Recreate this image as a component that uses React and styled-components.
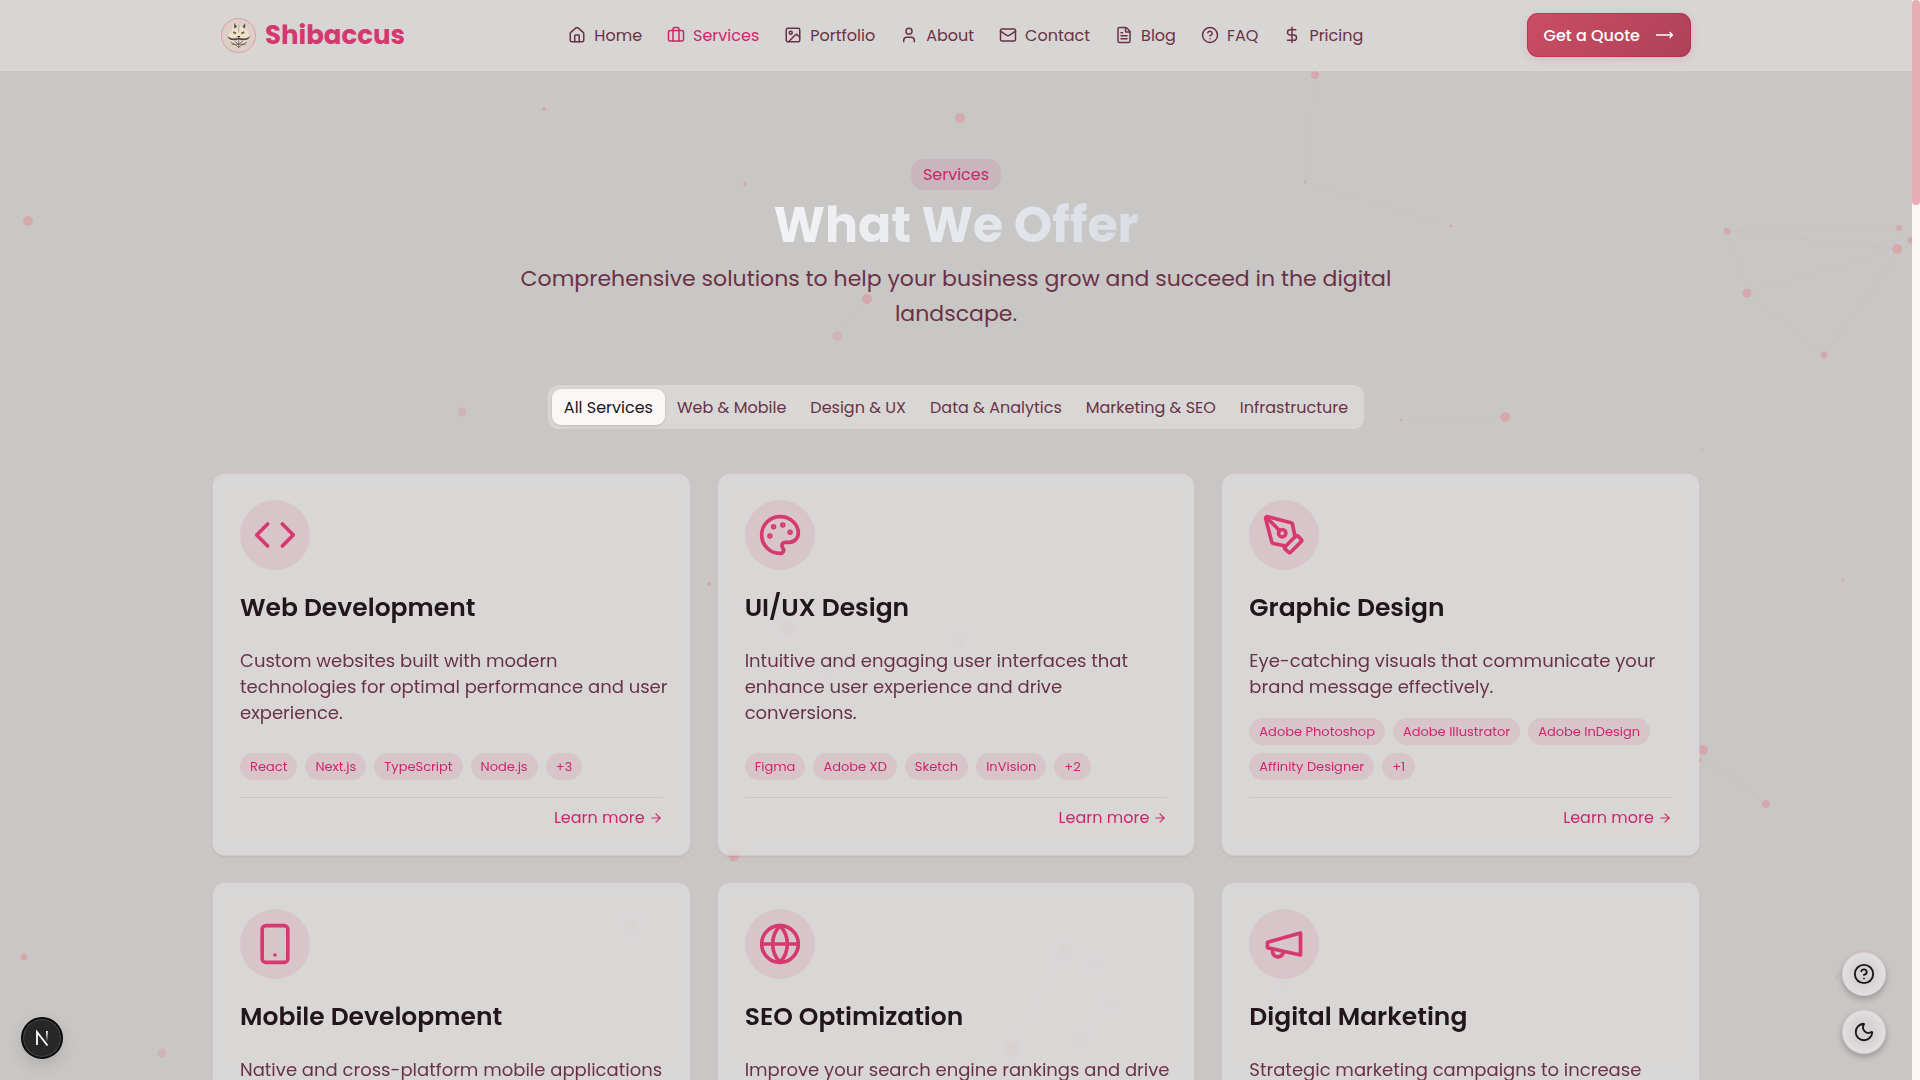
import React from "react";
import styled, { createGlobalStyle } from "styled-components";
import {
  House, Briefcase, Image, User, Mail, FileText, CircleQuestionMark, DollarSign,
  Code, Palette, PenTool, Smartphone, Globe, ArrowRight, Moon,
} from "lucide-react";

const color = {
  page: "#c9c7c6",
  panel: "rgba(233, 232, 233, 0.48)",
  pink: "#d0246b",
  wine: "#6b3145",
  ink: "#22161a",
  tint: "rgba(214, 51, 108, 0.11)",
};

const GlobalStyle = createGlobalStyle`
  *, *::before, *::after { box-sizing: border-box; }
  body {
    margin: 0;
    background: ${color.page};
    color: ${color.wine};
    font-family: Poppins, Inter, "Open Sans", sans-serif;
    font-size: 18px;
  }
  h1, h2, p, ul { margin: 0; padding: 0; }
  ul { list-style: none; }
  a { color: inherit; text-decoration: none; }
  button { font: inherit; border: 0; cursor: pointer; }
`;

const Window = styled.div`
  display: grid;
  grid-template-columns: minmax(0, 1fr) 8px;
  height: 100vh;
  overflow: hidden;
`;

const Page = styled.div`
  position: relative;
  overflow: hidden;
`;

const ScrollTrack = styled.div`
  background: #f9f8f7;
`;

const ScrollThumb = styled.div`
  height: 19%;
  border-radius: 4px;
  background: #e8acb5;
`;

const Backdrop = styled.svg`
  position: absolute;
  inset: 0;
  width: 100%;
  height: 100%;
  pointer-events: none;
`;

const Header = styled.header`
  position: relative;
  background: #d8d6d5;
  border-bottom: 1px solid #dcd9d3;
`;

const HeaderInner = styled.div`
  display: flex;
  justify-content: space-between;
  align-items: center;
  max-width: 1488px;
  height: 70px;
  margin: 0 auto;
  padding: 0 9px;
`;

const Brand = styled.a`
  display: flex;
  align-items: center;
  gap: 9px;
  color: #d5386f;
  font-size: 26px;
  font-weight: 700;
`;

const NavList = styled.nav`
  display: flex;
  gap: 25px;
`;

const NavLink = styled.a`
  display: flex;
  align-items: center;
  gap: 8px;
  color: ${(p) => (p.$active ? color.pink : color.wine)};
  font-size: 16px;
`;

const QuoteButton = styled.button`
  display: flex;
  align-items: center;
  gap: 16px;
  height: 44px;
  padding: 0 17px;
  border-radius: 11px;
  background: linear-gradient(135deg, #cb4d63, #ae4158);
  box-shadow: inset 0 0 0 1px rgba(190, 30, 70, 0.5), 0 2px 10px rgba(214, 60, 110, 0.2);
  color: #fff;
  font-size: 16px;
  font-weight: 500;
`;

const Main = styled.main`
  position: relative;
  max-width: 1488px;
  margin: 0 auto;
  padding-top: 88px;
`;

const Hero = styled.section`
  display: flex;
  flex-direction: column;
  align-items: center;
  text-align: center;
`;

const Badge = styled.span`
  padding: 0 12px;
  border-radius: 13px;
  background: rgba(208, 36, 107, 0.1);
  color: ${color.pink};
  font-size: 16px;
  line-height: 31px;
`;

const HeroTitle = styled.h1`
  background: linear-gradient(90deg, #f2f3f5, #d9dee5);
  background-clip: text;
  -webkit-background-clip: text;
  color: transparent;
  font-size: 49px;
  font-weight: 700;
  line-height: 71px;
`;

const HeroText = styled.p`
  max-width: 900px;
  color: ${color.wine};
  font-size: 22px;
  line-height: 35px;
`;

const TabBar = styled.div`
  display: flex;
  width: fit-content;
  margin: 54px auto 44px;
  padding: 4px;
  border-radius: 11px;
  background: ${color.panel};
`;

const Tab = styled.button`
  height: 36px;
  padding: 0 12px;
  border-radius: 9px;
  background: ${(p) => (p.$active ? "#f9f8f7" : "transparent")};
  box-shadow: ${(p) => (p.$active ? "0 1px 3px rgba(0, 0, 0, 0.12)" : "none")};
  color: ${(p) => (p.$active ? color.ink : color.wine)};
  font-size: 16px;
  white-space: nowrap;
`;

const CardGrid = styled.div`
  display: grid;
  grid-template-columns: repeat(3, minmax(0, 1fr));
  gap: 26px;
`;

const Card = styled.article`
  display: flex;
  flex-direction: column;
  align-items: flex-start;
  padding: 26px 27px;
  border: 1px solid rgba(222, 120, 150, 0.2);
  border-radius: 13px;
  background: ${color.panel};
  backdrop-filter: blur(5px);
  box-shadow: 0 1px 2px rgba(0, 0, 0, 0.08);
`;

const IconDisc = styled.div`
  padding: 13px;
  border-radius: 50%;
  background: ${color.tint};
  color: #d6396f;
  svg { display: block; width: 44px; height: 44px; }
`;

const CardTitle = styled.h2`
  margin-top: 20px;
  color: ${color.ink};
  font-size: 25px;
  font-weight: 600;
  line-height: 36px;
`;

const CardText = styled.p`
  margin: 22px -8px 18px 0;
  color: ${color.wine};
  font-size: 18px;
  line-height: 26px;
`;

const TagList = styled.ul`
  display: flex;
  flex-wrap: wrap;
  gap: 8px;
  margin-top: auto;
`;

const Tag = styled.li`
  padding: 0 10px;
  border-radius: 14px;
  background: ${color.tint};
  color: ${color.pink};
  font-size: 13px;
  line-height: 27px;
`;

const CardFooter = styled.footer`
  display: flex;
  justify-content: flex-end;
  align-self: stretch;
  margin-top: 17px;
  padding-top: 9px;
  border-top: 1px solid rgba(200, 130, 145, 0.28);
`;

const MoreLink = styled.a`
  display: flex;
  align-items: center;
  gap: 4px;
  color: ${color.pink};
  font-size: 16px;
  line-height: 22px;
`;

const FloatStack = styled.div`
  position: absolute;
  right: 26px;
  bottom: 26px;
  display: flex;
  flex-direction: column;
  gap: 14px;
`;

const FloatButton = styled.button`
  display: grid;
  place-items: center;
  width: 44px;
  height: 44px;
  padding: 0;
  border: 1px solid #e3c9d0;
  border-radius: 50%;
  background: radial-gradient(circle, #d3d1d1 30%, #e4e1e2 75%);
  box-shadow: 0 3px 6px rgba(0, 0, 0, 0.25);
  color: #1c1416;
`;

const DevButton = styled.button`
  position: absolute;
  left: 21px;
  bottom: 21px;
  display: grid;
  place-items: center;
  width: 42px;
  height: 42px;
  padding: 0;
  border: 2px solid #0b0b0b;
  border-radius: 50%;
  background: #272727;
  box-shadow: inset 0 0 0 1px #4a4a4a, 0 6px 16px rgba(0, 0, 0, 0.12);
`;

const particles = [
  [1315, 75, 4], [544, 109, 2], [960, 118, 5], [745, 184, 2], [28, 221, 5], [1305, 182, 1.5],
  [1451, 226, 1.5], [1727, 231, 3.5], [1899, 228, 3], [1897, 249, 5], [1911, 240, 3.5],
  [1747, 293, 4.5], [1824, 355, 3.5], [867, 299, 5], [837, 336, 5, 0.6], [462, 412, 4.5, 0.6],
  [1505, 417, 5], [1401, 420, 1.5], [1702, 450, 1.5, 0.6], [709, 584, 2], [1843, 580, 2, 0.6],
  [1703, 750, 5], [1700, 760, 2], [1766, 804, 4], [734, 856, 5.5], [24, 957, 3.5],
  [162, 1053, 4.5, 0.6], [1837, 977, 1.5, 0.6], [787, 627, 5], [958, 640, 5, 0.6],
  [829, 672, 4, 0.5], [631, 926, 6, 0.5], [1065, 949, 5, 0.6], [1095, 962, 4, 0.4],
  [1111, 1003, 4, 0.4], [1082, 1040, 5, 0.5], [1011, 1049, 6, 0.8], [1284, 984, 5, 0.5],
];

const threads = [
  [1727, 231, 1899, 228], [1727, 231, 1897, 249], [1727, 231, 1747, 293], [1899, 228, 1897, 249],
  [1897, 249, 1747, 293], [1897, 249, 1824, 355], [1911, 240, 1824, 355], [1305, 182, 1451, 226],
  [1305, 182, 1315, 75], [867, 299, 837, 336], [544, 109, 544, 71], [1747, 293, 1824, 355],
  [1505, 417, 1401, 420], [1703, 750, 1766, 804], [1700, 760, 1766, 804], [709, 584, 787, 627],
  [1065, 949, 1011, 1049], [1065, 949, 1111, 1003], [1111, 1003, 1082, 1040],
];

const navItems = [
  ["Home", House], ["Services", Briefcase], ["Portfolio", Image], ["About", User],
  ["Contact", Mail], ["Blog", FileText], ["FAQ", CircleQuestionMark], ["Pricing", DollarSign],
];

const tabs = [
  "All Services", "Web & Mobile", "Design & UX", "Data & Analytics", "Marketing & SEO", "Infrastructure",
];

function MegaphoneIcon() {
  return (
    <svg viewBox="0 0 24 24" fill="none" stroke="currentColor" strokeWidth="2" strokeLinecap="round" strokeLinejoin="round">
      <path d="m3 11 18-5v12L3 14v-3z" />
      <path d="M11.6 16.8a3 3 0 1 1-5.8-1.6" />
    </svg>
  );
}

const services = [
  {
    icon: Code,
    title: "Web Development",
    text: "Custom websites built with modern technologies for optimal performance and user experience.",
    tags: ["React", "Next.js", "TypeScript", "Node.js", "+3"],
  },
  {
    icon: Palette,
    title: "UI/UX Design",
    text: "Intuitive and engaging user interfaces that enhance user experience and drive conversions.",
    tags: ["Figma", "Adobe XD", "Sketch", "InVision", "+2"],
  },
  {
    icon: PenTool,
    title: "Graphic Design",
    text: "Eye-catching visuals that communicate your brand message effectively.",
    tags: ["Adobe Photoshop", "Adobe Illustrator", "Adobe InDesign", "Affinity Designer", "+1"],
  },
  { icon: Smartphone, title: "Mobile Development", text: "Native and cross-platform mobile applications", tags: [] },
  { icon: Globe, title: "SEO Optimization", text: "Improve your search engine rankings and drive", tags: [] },
  { icon: MegaphoneIcon, title: "Digital Marketing", text: "Strategic marketing campaigns to increase", tags: [] },
];

function BrandMark() {
  return (
    <svg width="35" height="35" viewBox="0 0 36 36" aria-hidden="true">
      <circle cx="18" cy="18" r="17.5" fill="#ddcfc6" stroke="#e48aa2" strokeWidth="0.8" />
      <path d="M13 4l4 5h3l5-5 2 9 3 6-4 6-8 6-8-6-4-6 5-6z" fill="#ebe2d2" />
      <path d="M13.500 5v6l3-2zM25 5v6l-3-2z" fill="#5f5145" />
      <path d="M12.500 14.500l3 1.300M24 14.500l-3 1.300" stroke="#76652c" strokeWidth="1.8" />
      <path d="M16.500 18.500h3.500l-1.700 2z" fill="#2b231e" />
      <path d="M6.500 18c3 4 7 3 11.700 2.500 4.800.5 8.800 1.500 11.800-2.500-1 5-6 6-11.800 4-5.700 2-10.700 1-11.700-4z" fill="#57493f" />
      <path d="M10 24.500l8.200 5.500 8.300-5.500M11 27h14.500M18.200 22v9M14 24l4.200 3 4.300-3" stroke="#6b5d51" strokeWidth="0.9" fill="none" />
      <path d="M18.300 7v8" stroke="#a99a86" strokeWidth="0.8" />
    </svg>
  );
}

function LongArrow() {
  return (
    <svg width="18" height="8" viewBox="0 0 18 8" fill="none" stroke="currentColor" strokeWidth="1.3" aria-hidden="true">
      <path d="M0 4h16.500M13.500 1l3 3-3 3" />
    </svg>
  );
}

function NextMark() {
  return (
    <svg width="15" height="16" viewBox="0 0 15 16" fill="none" strokeWidth="1.8" aria-hidden="true">
      <defs>
        <linearGradient id="nextFade" x1="0" y1="0" x2="0" y2="1">
          <stop offset="0" stopColor="#fff" />
          <stop offset="1" stopColor="#fff" stopOpacity="0" />
        </linearGradient>
      </defs>
      <path d="M2 15V2l10.500 13.500" stroke="#fff" />
      <rect x="11" y="1" width="1.800" height="11" fill="url(#nextFade)" />
    </svg>
  );
}

export default function App() {
  return (
    <Window>
      <GlobalStyle />
      <Page>
        <Backdrop aria-hidden="true">
          {threads.map(([x1, y1, x2, y2], i) => (
            <line key={i} x1={x1} y1={y1} x2={x2} y2={y2} stroke="#d4a3aa" strokeOpacity="0.16" />
          ))}
          {particles.map(([cx, cy, r, opacity = 1], i) => (
            <circle key={i} cx={cx} cy={cy} r={r} fill="#d4a9ad" opacity={opacity} />
          ))}
        </Backdrop>
        <Header>
          <HeaderInner>
            <Brand href="#home"><BrandMark />Shibaccus</Brand>
            <NavList aria-label="Main">
              {navItems.map(([label, Icon]) => (
                <NavLink key={label} href={`#${label.toLowerCase()}`} $active={label === "Services"}>
                  <Icon size={18} strokeWidth={2} />{label}
                </NavLink>
              ))}
            </NavList>
            <QuoteButton type="button">Get a Quote<LongArrow /></QuoteButton>
          </HeaderInner>
        </Header>
        <Main>
          <Hero>
            <Badge>Services</Badge>
            <HeroTitle>What We Offer</HeroTitle>
            <HeroText>
              Comprehensive solutions to help your business grow and succeed in the digital landscape.
            </HeroText>
          </Hero>
          <TabBar role="tablist">
            {tabs.map((label, i) => (
              <Tab key={label} type="button" role="tab" aria-selected={i === 0} $active={i === 0}>{label}</Tab>
            ))}
          </TabBar>
          <CardGrid>
            {services.map(({ icon: Icon, title, text, tags }) => (
              <Card key={title}>
                <IconDisc><Icon /></IconDisc>
                <CardTitle>{title}</CardTitle>
                <CardText>{text}</CardText>
                <TagList>{tags.map((tag) => <Tag key={tag}>{tag}</Tag>)}</TagList>
                <CardFooter>
                  <MoreLink href="#details">Learn more<ArrowRight size={14} /></MoreLink>
                </CardFooter>
              </Card>
            ))}
          </CardGrid>
        </Main>
        <FloatStack>
          <FloatButton type="button" aria-label="Help"><CircleQuestionMark size={22} /></FloatButton>
          <FloatButton type="button" aria-label="Toggle theme"><Moon size={22} /></FloatButton>
        </FloatStack>
        <DevButton type="button" aria-label="Developer tools"><NextMark /></DevButton>
      </Page>
      <ScrollTrack><ScrollThumb /></ScrollTrack>
    </Window>
  );
}
